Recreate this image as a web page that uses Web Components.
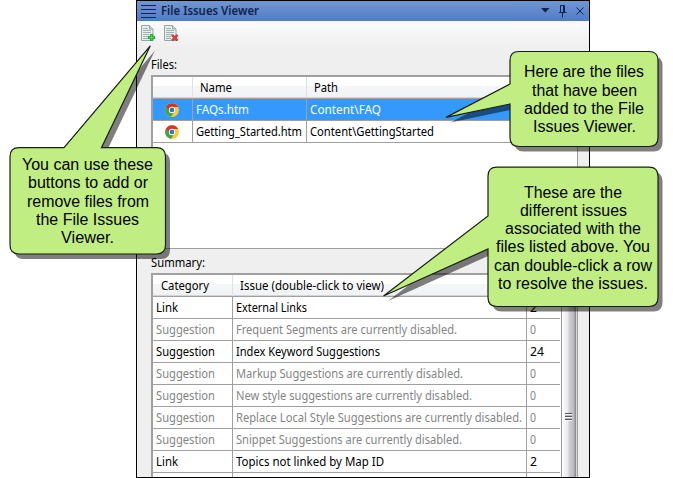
<!DOCTYPE html>
<html lang="en">
<head>
<meta charset="utf-8">
<title>File Issues Viewer</title>
<style>
html,body{margin:0;background:#fff}
body{width:673px;height:478px;overflow:hidden;position:relative;font:12px/16px "Noto Sans","Open Sans",sans-serif;color:#000}
</style>
</head>
<body>
<issues-window></issues-window>
<call-out style="left:0;top:40px" data-w="180" data-h="225" data-path="M19 107.7H64L150.3 5.8L101.5 107.7H156.5Q165.5 107.7 165.5 116.7V205Q165.5 214 156.5 214H19Q10 214 10 205V116.7Q10 107.7 19 107.7Z" data-x="10" data-y="108.2" data-bw="155.5" data-bh="107.2">
<fit-text w="131">You can use these</fit-text><fit-text w="120">buttons to add or</fit-text><fit-text w="122">remove files from</fit-text><fit-text w="103">the File Issues</fit-text><fit-text w="53">Viewer.</fit-text>
</call-out>
<call-out style="left:440px;top:45px" data-w="230" data-h="115" data-path="M79 6.5H209Q218 6.5 218 15.5V92.5Q218 101.5 209 101.5H79Q70 101.5 70 92.5V59L6 72.4L70 39V15.5Q70 6.5 79 6.5Z" data-x="70" data-y="6.5" data-bw="148" data-bh="97">
<fit-text w="120">Here are the files</fit-text><fit-text w="105">that have been</fit-text><fit-text w="120">added to the File</fit-text><fit-text w="103">Issues Viewer.</fit-text>
</call-out>
<call-out style="left:375px;top:160px" data-w="295" data-h="160" data-path="M122 7.2H274Q283 7.2 283 16.2V137.5Q283 146.5 274 146.5H122Q113 146.5 113 137.5V89L8.5 136L113 56V16.2Q113 7.2 122 7.2Z" data-x="113" data-y="7.8" data-bw="170" data-bh="141.3">
<fit-text w="98">These are the</fit-text><fit-text w="107">different issues</fit-text><fit-text w="136">associated with the</fit-text><fit-text w="154">files listed above. You</fit-text><fit-text w="158">can double-click a row</fit-text><fit-text w="150">to resolve the issues.</fit-text>
</call-out>

<script>
/* Single line of text, condensed or widened to the width given in "w". */
class FitText extends HTMLElement{
  connectedCallback(){
    if(this.shadowRoot)return;
    this.attachShadow({mode:'open'}).innerHTML=`<style>
      :host{display:block;white-space:nowrap;flex:none}
      span{display:inline-block;transform-origin:0 50%;white-space:nowrap}
    </style><span><slot></slot></span>`;
    const w=+this.getAttribute('w'),s=this.shadowRoot.querySelector('span');
    this.style.width=w+'px';
    const n=s.offsetWidth?s.getBoundingClientRect().width:w;
    s.style.transform=`scaleX(${w/n})`;
  }
}

class DocIcon extends HTMLElement{
  connectedCallback(){
    const mark=this.getAttribute('mark')==='add'
      ?'<path d="M9.500 10.500h2v2h2v2h-2v2h-2v-2h-2v-2h2z" fill="#4be05c" stroke="#1fae34" stroke-width="1.200"/>'
      :'<path d="M8 11l5.500 5.500M13.500 11L8 16.500" stroke="#b3201f" stroke-width="2.400"/><path d="M8 11l5.500 5.500M13.500 11L8 16.500" stroke="#e8443f" stroke-width="1.100"/>';
    this.attachShadow({mode:'open'}).innerHTML=`<style>:host{display:block;width:16px;height:18px}svg{display:block}</style>
    <svg width="16" height="18" fill="none"><path d="M.5 1.500h8l3.500 3.500v11.500H.5z" fill="#e6eeee" stroke="#93a6a6"/><path d="M8.500 1.500v3.500h3.500" fill="#d0dcdc" stroke="#93a6a6"/><path d="M2 4.500h5M2 6.500h8M2 8.500h8M2 10.500h6M2 12.500h5M2 14.500h5" stroke="#a3b1b1"/>${mark}</svg>`;
  }
}

class ChromeIcon extends HTMLElement{
  connectedCallback(){
    this.attachShadow({mode:'open'}).innerHTML=`<style>:host{display:block;width:14px;height:14px}svg{display:block}</style>
    <svg width="14" height="14" viewBox="0 0 14 14"><circle cx="7" cy="7" r="6.900" fill="#f9cf2b"/>
    <path d="M7 7L1.050 3.550A6.900 6.900 0 0 0 6 13.830L9.600 8.500z" fill="#3fa648"/>
    <path d="M7 7L1.050 3.550A6.900 6.900 0 0 1 13.200 4H7z" fill="#dd3327"/>
    <path d="M1.050 3.550L4.400 8.500L7 7V4z" fill="#dd3327"/><path d="M1.050 3.550L4.400 8.500L3 9.500A6 6 0 0 1 1.050 3.550" fill="#3fa648"/>
    <circle cx="7" cy="7" r="3.200" fill="#fff"/><circle cx="7" cy="7" r="2.350" fill="#2f75c9"/></svg>`;
  }
}

class GridRow extends HTMLElement{
  connectedCallback(){
    this.attachShadow({mode:'open'}).innerHTML=`<style>
      :host{display:grid;grid-template-columns:var(--cols);height:21px;border-bottom:1px solid #a0a0a0;color:#000}
      :host([head]){background:linear-gradient(#fff 0 9px,#f5f6f8 9px,#f1f2f4);--line:#dfe1e4;--pad:7px;box-shadow:inset 0 -1px #d5d5d5}
      :host([selected]){background:#3399ff;color:#fff}
      :host([off]){color:#858585}
      ::slotted(*){box-sizing:border-box;height:21px;border-right:1px solid var(--line,#a0a0a0);padding:3px 0 0 var(--pad,3px);overflow:hidden}
      ::slotted(:last-child){border-right:0}
    </style><slot></slot>`;
  }
}

class DataTable extends HTMLElement{
  connectedCallback(){
    this.attachShadow({mode:'open'}).innerHTML=`<style>
      :host{display:block;box-sizing:border-box;background:#fff;border-style:solid;border-color:#a0a0a0;border-width:2px 1px 0 1px;overflow:hidden}
      .body{display:flex;height:100%}
      .rows{flex:1;min-width:0;border-left:1px solid #a0a0a0}
    </style><div class="body"><div class="rows"><slot></slot></div><slot name="bar"></slot></div>`;
  }
}

class ScrollBar extends HTMLElement{
  connectedCallback(){
    this.attachShadow({mode:'open'}).innerHTML=`<style>
      :host{display:flex;align-items:center;justify-content:center;box-sizing:border-box;width:16px;height:100%;margin-left:1px;border-left:1px solid #969696;border-right:1px solid #d8d8d8;background:linear-gradient(90deg,#fff 0 1px,#f5f5f5 2px,#e9e9eb 6px,#d0d1d4 7px,#b9bbc0 12px,#8f8f8f 13px)}
      i{display:block;width:7px;height:8px;margin:81px 2px 0 0;background:repeating-linear-gradient(#555 0 1px,#f4f4f4 1px 2px,#bbb 2px 3px)}
    </style><i></i>`;
  }
}

class IssuesWindow extends HTMLElement{
  connectedCallback(){
    const t=(s,w)=>`<fit-text w="${w}">${s}</fit-text>`;
    const rows=[['Link',22,'External Links',71,'2',7,0],['Suggestion',59,'Frequent Segments are currently disabled.',221,'0',6,1],
      ['Suggestion',59,'Index Keyword Suggestions',144,'24',14,0],['Suggestion',59,'Markup Suggestions are currently disabled.',227,'0',6,1],
      ['Suggestion',59,'New style suggestions are currently disabled.',236,'0',6,1],['Suggestion',59,'Replace Local Style Suggestions are currently disabled.',286,'0',6,1],
      ['Suggestion',59,'Snippet Suggestions are currently disabled.',226,'0',6,1],['Link',22,'Topics not linked by Map ID',148,'2',7,0]]
      .map(r=>`<grid-row ${r[6]?'off':''}><div>${t(r[0],r[1])}</div><div>${t(r[2],r[3])}</div><div>${t(r[4],r[5])}</div></grid-row>`).join('');
    this.attachShadow({mode:'open'}).innerHTML=`<style>
      :host{display:flex;flex-direction:column;box-sizing:border-box;width:454px;height:478px;margin-left:136px;border:1px solid #000;background:#efefef;overflow:hidden}
      header{display:flex;align-items:center;height:20px;flex:none;box-sizing:border-box;padding:0 5px 0 4px;background:linear-gradient(#7395d3,#4f7dc5);color:#11234b;font-weight:600}
      header fit-text{margin:0 auto 0 5px}
      svg{display:block}
      nav{display:flex;gap:7px;height:27px;flex:none;box-sizing:border-box;padding:3px 0 0 4px;background:linear-gradient(#fcfcfc,#efefef)}
      .label{height:16px;flex:none;margin-left:14px}
      .files{--cols:40px 114px 1fr;height:173px;flex:none;margin:2px 11px 0 14px}
      .sum{--cols:80px 294px 1fr;height:204px;flex:none;margin:2px 11px 0 14px}
      .l1{margin-top:9px}.l2{margin-top:6px}
      hr{display:block;margin:0 11px 0 14px;border:0;height:1px;background:#a0a0a0;flex:none}
      .ic{padding:4px 0 0 12px}
      .p8{padding-left:8px}
    </style>
    <header><svg width="15" height="14" fill="none" stroke="#11234b"><path d="M0 1.500h15M0 5.500h15M0 9.500h15M0 13.500h15"/></svg>
      ${t('File Issues Viewer',98)}
      <svg width="44" height="14" fill="none" stroke="#10244f"><path d="M1 4h8.500L5.250 8.500z" fill="#10244f" stroke="none"/><path d="M20.500 8V1.500h4V8M23.500 1.500V8M19 8.500h7.500M22.500 9v4.500M36.500 3.500l7 7M43.500 3.500l-7 7"/></svg></header>
    <nav><doc-icon mark="add"></doc-icon><doc-icon mark="remove"></doc-icon></nav>
    <div class="label l1">${t('Files:',26)}</div>
    <data-table class="files">
      <grid-row head><div></div><div>${t('Name',32)}</div><div>${t('Path',24)}</div></grid-row>
      <grid-row selected><div class="ic"><chrome-icon></chrome-icon></div><div>${t('FAQs.htm',53)}</div><div>${t('Content\\FAQ',71)}</div></grid-row>
      <grid-row><div class="ic"><chrome-icon></chrome-icon></div><div>${t('Getting_Started.htm',106)}</div><div>${t('Content\\GettingStarted',124)}</div></grid-row>
    </data-table>
    <hr>
    <div class="label l2">${t('Summary:',54)}</div>
    <data-table class="sum">
      <grid-row head><div class="p8">${t('Category',48)}</div><div>${t('Issue (double-click to view)',144)}</div><div></div></grid-row>
      ${rows}<grid-row><div></div><div></div><div></div></grid-row>
      <scroll-bar slot="bar"></scroll-bar>
    </data-table>`;
  }
}

/* Speech balloon laid over the window, with an offset shadow. */
class CallOut extends HTMLElement{
  connectedCallback(){
    const d=this.dataset;
    this.attachShadow({mode:'open'}).innerHTML=`<style>
      :host{display:block;position:absolute;width:${d.w}px;height:${d.h}px;font:16px/18.300px "Liberation Sans",Arial,sans-serif;color:#000}
      svg{position:absolute;left:0;top:0;overflow:visible}
      .t{position:absolute;left:${d.x}px;top:${d.y}px;width:${d.bw}px;height:${d.bh}px;display:flex;flex-direction:column;align-items:center;justify-content:center}
    </style><svg width="${d.w}" height="${d.h}"><path d="${d.path}" transform="translate(4.500 5)" fill="#000" fill-opacity=".5"/><path d="${d.path}" fill="#c1ee82" stroke="#17200c" stroke-width="1.200"/></svg><div class="t"><slot></slot></div>`;
  }
}
customElements.define('fit-text',FitText);
customElements.define('doc-icon',DocIcon);
customElements.define('chrome-icon',ChromeIcon);
customElements.define('grid-row',GridRow);
customElements.define('data-table',DataTable);
customElements.define('scroll-bar',ScrollBar);
customElements.define('call-out',CallOut);
customElements.define('issues-window',IssuesWindow);
/* Texts upgraded before their container's font applied are measured again here. */
document.querySelectorAll('call-out fit-text').forEach(e=>{
  const s=e.shadowRoot.querySelector('span');s.style.transform='none';
  s.style.transform=`scaleX(${e.getAttribute('w')/s.getBoundingClientRect().width})`;
});
</script>
</body>
</html>
